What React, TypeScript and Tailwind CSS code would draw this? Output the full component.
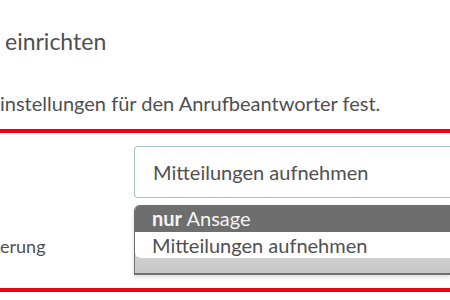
export default function App() {
  return (
    <div className="relative h-[300px] w-[450px] overflow-hidden bg-white font-['Lato','Liberation_Sans',sans-serif] text-[#505050]">
      {/* Titel */}
      <h1 className="pl-[5px] pt-[28px] text-[23px] leading-[26px]">einrichten</h1>

      {/* Beschreibung */}
      <p className="mt-[38px] text-[20px] leading-[22px]">
        instellungen für den Anrufbeantworter fest.
      </p>

      {/* markierter Bereich */}
      <section className="relative mt-[15px] h-[163px] border-y-4 border-[#e30613]">
        <div className="pt-[13px] pl-[134px]">
          <div className="flex h-[52px] items-center rounded-l-[4px] border border-r-0 border-[#a9c1c8] pl-[18px] text-[20px]">
            Mitteilungen aufnehmen
          </div>
        </div>

        <div className="mt-[37px] text-[18px] leading-[22px]">erung</div>

        {/* geöffnete Auswahlliste */}
        <div className="absolute left-[134px] top-[72px] right-0 h-[70px] overflow-hidden rounded-tl-[6px] border-b-2 border-l border-[#6f6f6f] bg-gradient-to-b from-[#e2e2e2] to-[#c8c8c8] shadow-[0_2px_4px_rgba(0,0,0,0.15)]">
          <div className="h-[27px] bg-[#6e6e6e] pl-[17px] text-[20px] leading-[27px] text-[#f4f4f4]">
            <span className="font-bold">nur</span> Ansage
          </div>
          <div className="h-[26px] rounded-bl-[6px] bg-white pl-[17px] text-[20px] leading-[26px] text-[#505050]">
            Mitteilungen aufnehmen
          </div>
        </div>
      </section>
    </div>
  );
}
